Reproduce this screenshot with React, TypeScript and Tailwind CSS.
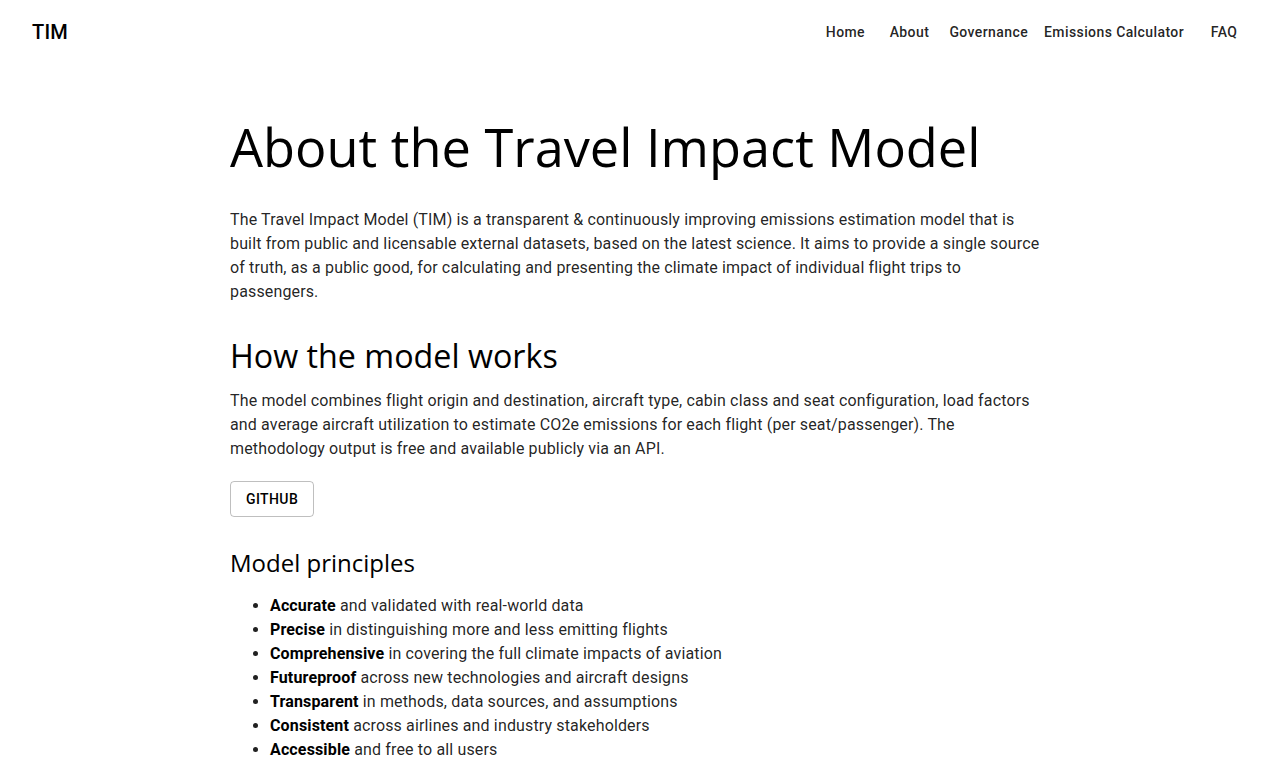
import React from 'react';

const navItems = ['Home', 'About', 'Governance', 'Emissions Calculator', 'FAQ'];

const principles: [string, string][] = [
  ['Accurate', 'and validated with real-world data'],
  ['Precise', 'in distinguishing more and less emitting flights'],
  ['Comprehensive', 'in covering the full climate impacts of aviation'],
  ['Futureproof', 'across new technologies and aircraft designs'],
  ['Transparent', 'in methods, data sources, and assumptions'],
  ['Consistent', 'across airlines and industry stakeholders'],
  ['Accessible', 'and free to all users'],
];

const roboto = { fontFamily: 'Roboto, "Liberation Sans", sans-serif' };
const openSans = { fontFamily: '"Open Sans", "Liberation Sans", sans-serif' };

export default function App() {
  return (
    <div className="min-h-screen bg-white text-black" style={roboto}>
      <header className="flex h-16 items-center justify-between pl-8 pr-6">
        <div className="text-[20px] font-medium leading-none tracking-[0.01em]">TIM</div>
        <nav className="flex items-center">
          {navItems.map((item) => (
            <button
              key={item}
              className="min-w-16 px-2 py-1.5 text-center text-sm font-medium leading-6 tracking-[0.02857em] text-black/87"
            >
              {item}
            </button>
          ))}
        </nav>
      </header>

      <main className="mx-auto w-[820px] pt-[51px]">
        <h1 className="text-[52.3px] font-normal leading-[64px]" style={openSans}>
          About the Travel Impact Model
        </h1>
        <p className="mt-[29px] text-base leading-6 tracking-[0.009em] text-black/87">
          The Travel Impact Model (TIM) is a transparent &amp; continuously improving emissions estimation model that is
          built from public and licensable external datasets, based on the latest science. It aims to provide a single source
          of truth, as a public good, for calculating and presenting the climate impact of individual flight trips to
          passengers.
        </p>

        <h2 className="mt-[32px] text-[32.25px] font-normal leading-[40px]" style={openSans}>
          How the model works
        </h2>
        <p className="mt-[13px] text-base leading-6 tracking-[0.009em] text-black/87">
          The model combines flight origin and destination, aircraft type, cabin class and seat configuration, load factors
          and average aircraft utilization to estimate CO2e emissions for each flight (per seat/passenger). The
          methodology output is free and available publicly via an API.
        </p>

        <button className="mt-[20px] h-9 rounded border border-black/25 px-[15px] text-sm font-medium uppercase leading-6 tracking-[0.02857em]">
          GitHub
        </button>

        <h3 className="mt-[30px] text-[24px] font-normal leading-[32px]" style={openSans}>
          Model principles
        </h3>
        <ul className="mt-[15px] list-disc pl-10 text-base leading-6 tracking-[0.009em] text-black/87">
          {principles.map(([bold, rest]) => (
            <li key={bold}>
              <b className="font-bold text-black">{bold}</b> {rest}
            </li>
          ))}
        </ul>
      </main>
    </div>
  );
}
